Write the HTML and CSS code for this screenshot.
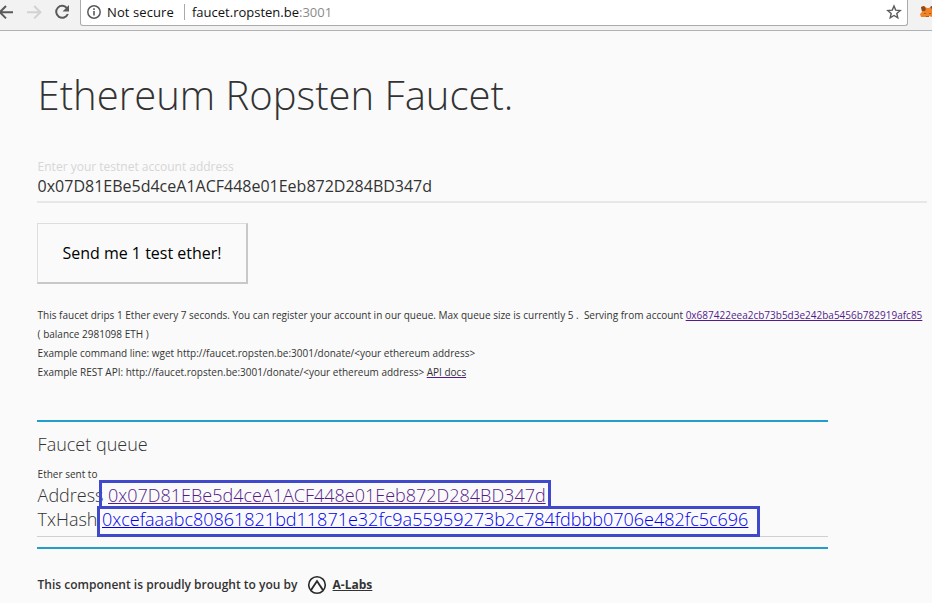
FILE: index.html
```html
<!DOCTYPE html>
<html lang="en">
<head>
<meta charset="utf-8">
<title>Ethereum Ropsten Faucet</title>
<link rel="stylesheet" href="styles.css">
</head>
<body>
<header class="toolbar">
  <svg class="nav-icons" width="80" height="30" viewBox="0 0 80 30" fill="none" stroke-width="2">
    <path d="M13 12.2H0M6 6L-.2 12.2L6 18.4" stroke="#5a5a5a"/>
    <path d="M27 12.2H40M34.2 6L40.4 12.2L34.2 18.4" stroke="#d2d2d2"/>
    <path d="M67.2 8.5A6 6 0 1 0 67.8 14" stroke="#5a5a5a"/>
    <path d="M69 5V11.5H62.5Z" fill="#5a5a5a"/>
  </svg>
  <div class="omnibox">
    <svg class="info" width="16" height="16" viewBox="0 0 16 16" fill="none" stroke="#5a5a5a">
      <circle cx="8" cy="8" r="6.2" stroke-width="1.5"/>
      <path d="M8 7V11.5M8 4.3V5.9" stroke-width="1.6"/>
    </svg>
    <span class="security">Not secure</span>
    <span class="divider"></span>
    <span class="url">faucet.ropsten.be<span class="port">:3001</span></span>
    <svg class="star" width="16" height="16" viewBox="0 0 16 16" fill="none" stroke="#5a5a5a" stroke-width="1.4">
      <path d="M8 2L9.7 6.1L14.2 6.5L10.8 9.4L11.8 13.8L8 11.5L4.2 13.8L5.2 9.4L1.8 6.5L6.3 6.1Z"/>
    </svg>
  </div>
  <svg class="fox" width="12" height="16" viewBox="0 0 12 16">
    <path d="M1 3L4 2L7 4H9L12 2V13L9 12L7 13L5 13L1 13L0 10L2 8Z" fill="#ee8328"/>
    <path d="M1 3L4 2L6 5L5 7L2 7ZM10 3L12 2V5Z" fill="#8c4a1c"/>
    <path d="M4 9H6V10H4ZM9 9H11V10H9ZM6 12H9V13H6Z" fill="#b5561c"/>
  </svg>
</header>
<main class="page">
  <h1 class="title">Ethereum Ropsten Faucet.</h1>
  <div class="field">
    <div class="label">Enter your testnet account address</div>
    <div class="value">0x07D81EBe5d4ceA1ACF448e01Eeb872D284BD347d</div>
  </div>
  <button class="send">Send me 1 test ether!</button>
  <div class="notes">
    <div class="drip">This faucet drips 1 Ether every 7 seconds. You can register your account in our queue. Max queue size is currently 5 .&nbsp; Serving from account <a class="visited" href="#">0x687422eea2cb73b5d3e242ba5456b782919afc85</a></div>
    <div>( balance 2981098 ETH )</div>
    <div>Example command line: wget http://faucet.ropsten.be:3001/donate/&lt;your ethereum address&gt;</div>
    <div>Example REST API: http://faucet.ropsten.be:3001/donate/&lt;your ethereum address&gt; <a class="docs" href="#">API docs</a></div>
  </div>
  <section class="queue">
    <h2 class="queue-title">Faucet queue</h2>
    <div class="sent">Ether sent to</div>
    <div class="row"><span class="address">Address</span><a class="visited mark mark-address" href="#">0x07D81EBe5d4ceA1ACF448e01Eeb872D284BD347d</a></div>
    <div class="row"><span class="tx">TxHash</span><a class="fresh mark mark-tx" href="#">0xcefaaabc80861821bd11871e32fc9a55959273b2c784fdbbb0706e482fc5c696</a></div>
  </section>
  <footer class="credit">
    <span class="credit-text">This component is proudly brought to you by</span>
    <svg width="20" height="20" viewBox="0 0 20 20" fill="none" stroke="#292929" stroke-width="1.6">
      <circle cx="10" cy="10" r="8.3"/>
      <path d="M4.1 15L10 6.1L15.9 15" stroke-width="1.9"/>
    </svg>
    <a class="labs" href="#">A-Labs</a>
  </footer>
</main>
</body>
</html>
```

FILE: styles.css
```css
*, *::after { box-sizing: border-box; }
body {
  margin: 0;
  height: 603px;
  overflow: hidden;
  background: #fafafa;
  color: #333;
  font-family: "Open Sans", sans-serif;
  white-space: nowrap;
}
a { color: inherit; text-decoration-thickness: 1px; }
.toolbar {
  display: flex;
  height: 31px;
  background: #f2f2f2;
  border-bottom: 1px solid #b2b2b2;
}
.nav-icons { flex: none; }
.omnibox {
  display: flex;
  width: 828px;
  height: 26px;
  padding-left: 5px;
  background: #fff;
  border: 1px solid #ababab;
  border-top: 0;
  border-radius: 0 0 3px 3px;
  font-size: 13px;
  line-height: 24px;
  color: #111;
}
.info { margin: 4px 5px 0 0; }
.security { width: 67px; letter-spacing: .1px; }
.divider { width: 1px; height: 16px; margin: 4px 7px 0 10px; background: #aaa; }
.port { color: #8a8a8a; }
.star { margin: 4px 5px 0 auto; }
.fox { margin: 4px 0 0 12px; flex: none; }
.page { padding: 34px 5px 0 37px; text-indent: .6px; }
.title { margin: 0; font-size: 40px; line-height: 60px; font-weight: 300; letter-spacing: 0; }
.field { height: 44px; margin-top: 34px; border-bottom: 2px solid #e7e7e7; }
.label { font-size: 12px; line-height: 16px; color: #d6d6d6; }
.value { font-size: 16px; line-height: 22px; }
.send {
  display: block;
  width: 211px;
  height: 61px;
  margin: 20px 0 0;
  padding: 0;
  border: solid #c8c8c8;
  border-width: 1px 2px 2px 1px;
  border-top-color: #ddd;
  border-left-color: #ddd;
  background: #fafafa;
  color: #000;
  font: 16px "Open Sans", sans-serif;
}
.notes { margin-top: 22px; font-size: 10px; line-height: 19px; }
.visited { color: #551a8b; }
.fresh { color: #0000ee; }
.docs { text-decoration-color: #551a8b; }
.queue {
  position: relative;
  width: 791px;
  height: 129px;
  margin-top: 38px;
  padding-top: 10px;
  border-top: 2px solid #219fca;
  border-bottom: 2px solid #219fca;
}
.queue::after {
  content: "";
  display: block;
  height: 1px;
  margin-top: 5px;
  background: #d0d0d0;
}
.queue-title { margin: 0; font-size: 18px; line-height: 24px; font-weight: 300; }
.sent { margin-top: 10px; font-size: 10px; line-height: 17px; }
.row { display: flex; font-size: 18px; line-height: 24px; font-weight: 300; }
.address { width: 71px; }
.tx { width: 65px; }
.mark { position: relative; text-indent: 0; }
.mark::after { content: ""; position: absolute; border: 3px solid #4048cc; }
.mark-address::after { left: -9px; top: -3px; width: 452px; height: 29px; }
.mark-tx::after { left: -5px; top: -1px; width: 663px; height: 31px; }
.credit {
  display: flex;
  align-items: center;
  height: 20px;
  margin-top: 26px;
  font-size: 12px;
  font-weight: 600;
  line-height: 20px;
}
.credit-text { width: 270px; }
.labs { margin-left: 5px; font-weight: 700; }
```
